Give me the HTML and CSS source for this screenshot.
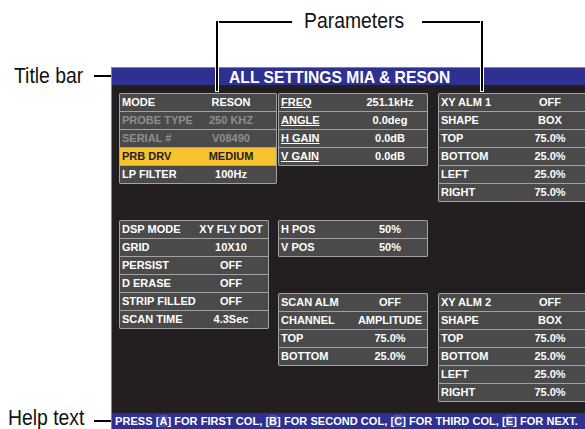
FILE: index.html
```html
<!DOCTYPE html>
<html lang="en">
  <head>
    <meta charset="UTF-8" />
    <title>All Settings MIA &amp; Reson</title>
    <link rel="stylesheet" href="styles.css">
  </head>
  <body>
    <div class="page">
      <div class="screen">
        <div class="titlebar">ALL SETTINGS MIA &amp; RESON</div>

        <div class="panes">
          <div class="pane pane-1">
            <div class="group group-wide">
              <div class="row"><span class="label">MODE</span><span class="value">RESON</span></div>
              <div class="row dim"><span class="label">PROBE TYPE</span><span class="value">250 KHZ</span></div>
              <div class="row dim"><span class="label">SERIAL #</span><span class="value">V08490</span></div>
              <div class="row active"><span class="label">PRB DRV</span><span class="value">MEDIUM</span></div>
              <div class="row"><span class="label">LP FILTER</span><span class="value">100Hz</span></div>
            </div>
            <div class="group space-36">
              <div class="row"><span class="label">DSP MODE</span><span class="value">XY FLY DOT</span></div>
              <div class="row"><span class="label">GRID</span><span class="value">10X10</span></div>
              <div class="row"><span class="label">PERSIST</span><span class="value">OFF</span></div>
              <div class="row"><span class="label">D ERASE</span><span class="value">OFF</span></div>
              <div class="row"><span class="label">STRIP FILLED</span><span class="value">OFF</span></div>
              <div class="row"><span class="label">SCAN TIME</span><span class="value">4.3Sec</span></div>
            </div>
          </div>

          <div class="pane pane-2">
            <div class="group">
              <div class="row"><span class="label link">FREQ</span><span class="value">251.1kHz</span></div>
              <div class="row"><span class="label link">ANGLE</span><span class="value">0.0deg</span></div>
              <div class="row"><span class="label link">H GAIN</span><span class="value">0.0dB</span></div>
              <div class="row"><span class="label link">V GAIN</span><span class="value">0.0dB</span></div>
            </div>
            <div class="group space-54">
              <div class="row"><span class="label">H POS</span><span class="value">50%</span></div>
              <div class="row"><span class="label">V POS</span><span class="value">50%</span></div>
            </div>
            <div class="group space-36">
              <div class="row"><span class="label">SCAN ALM</span><span class="value">OFF</span></div>
              <div class="row"><span class="label">CHANNEL</span><span class="value">AMPLITUDE</span></div>
              <div class="row"><span class="label">TOP</span><span class="value">75.0%</span></div>
              <div class="row"><span class="label">BOTTOM</span><span class="value">25.0%</span></div>
            </div>
          </div>

          <div class="pane pane-3">
            <div class="group">
              <div class="row"><span class="label">XY ALM 1</span><span class="value">OFF</span></div>
              <div class="row"><span class="label">SHAPE</span><span class="value">BOX</span></div>
              <div class="row"><span class="label">TOP</span><span class="value">75.0%</span></div>
              <div class="row"><span class="label">BOTTOM</span><span class="value">25.0%</span></div>
              <div class="row"><span class="label">LEFT</span><span class="value">25.0%</span></div>
              <div class="row"><span class="label">RIGHT</span><span class="value">75.0%</span></div>
            </div>
            <div class="group space-91">
              <div class="row"><span class="label">XY ALM 2</span><span class="value">OFF</span></div>
              <div class="row"><span class="label">SHAPE</span><span class="value">BOX</span></div>
              <div class="row"><span class="label">TOP</span><span class="value">75.0%</span></div>
              <div class="row"><span class="label">BOTTOM</span><span class="value">25.0%</span></div>
              <div class="row"><span class="label">LEFT</span><span class="value">25.0%</span></div>
              <div class="row"><span class="label">RIGHT</span><span class="value">75.0%</span></div>
            </div>
          </div>
        </div>

        <div class="helpbar">
          PRESS [<span class="key">A</span>] FOR FIRST COL, [<span class="key">B</span>] FOR SECOND COL, [<span class="key">C</span>] FOR THIRD COL, [<span class="key">E</span>] FOR NEXT.
        </div>
      </div>

      <!-- callouts -->
      <div class="callout callout-title">Title bar</div>
      <div class="callout callout-params">Parameters</div>
      <div class="callout callout-help">Help text</div>

      <div class="hline line-title"></div>
      <div class="hline line-help"></div>
      <div class="hline line-params-left"></div>
      <div class="hline line-params-right"></div>
      <div class="vline vline-left"></div>
      <div class="vline vline-right"></div>
    </div>
  </body>
</html>
```

FILE: styles.css
```css
html,
body {
  margin: 0;
  overflow: hidden;
  background: #ffffff;
}

.page {
  position: relative;
  width: 585px;
  height: 429px;
  overflow: hidden;
  padding: 67px 0 0 111px;
  box-sizing: border-box;
}

.screen {
  width: 490px;
  height: 370px;
  background: #231f20;
  border-left: 1px solid #858585;
  border-top: 1px solid #858585;
  font-family: "Liberation Sans", Arial, sans-serif;
  font-weight: bold;
  color: #ffffff;
}

.titlebar {
  height: 17px;
  line-height: 19px;
  padding-left: 117px;
  background: #2e3192;
  font-size: 15.7px;
  white-space: nowrap;
}

.panes {
  height: 320px;
  padding: 8px 0 0 7px;
  display: flex;
}

.pane {
  display: flex;
  flex-direction: column;
  align-items: flex-start;
}

.pane-1 {
  width: 159px;
}

.pane-2 {
  width: 160px;
}

.pane-3 {
  width: 152px;
}

.group {
  width: 148px;
  border: 1px solid #a2a2a2;
  border-bottom: none;
  border-radius: 2px;
  background: #4a4a4a;
}

.group-wide {
  width: 156px;
}

.space-36 {
  margin-top: 36px;
}

.space-54 {
  margin-top: 54px;
}

.space-91 {
  margin-top: 91px;
}

.row {
  display: grid;
  grid-template-columns: 70px 82px;
  height: 17px;
  line-height: 17px;
  border-bottom: 1px solid #a2a2a2;
  font-size: 11px;
  white-space: nowrap;
}

.label {
  padding-left: 2px;
}

.value {
  text-align: center;
}

.link {
  text-decoration: underline;
}

.dim {
  color: #8e8e8e;
}

.active {
  background: #f6c22e;
  color: #231f20;
}

.helpbar {
  height: 17px;
  line-height: 17px;
  padding-left: 3px;
  background: #2e3192;
  font-size: 11px;
  letter-spacing: 0.05px;
  white-space: nowrap;
}

.key {
  background: #4a4fa8;
}

/* callouts over the figure */
.callout {
  position: absolute;
  font-family: "Liberation Sans", Arial, sans-serif;
  font-size: 22px;
  line-height: 22px;
  color: #111111;
  white-space: nowrap;
  transform: scaleX(0.88);
  transform-origin: left center;
}

.callout-title {
  left: 14px;
  top: 65px;
}

.callout-params {
  left: 304px;
  top: 10px;
}

.callout-help {
  left: 8px;
  top: 407px;
}

.hline {
  position: absolute;
  height: 2px;
  background: #000000;
}

.line-title {
  left: 94px;
  top: 75px;
  width: 17px;
}

.line-help {
  left: 94px;
  top: 420px;
  width: 17px;
}

.line-params-left {
  left: 216px;
  top: 21px;
  width: 76px;
}

.line-params-right {
  left: 422px;
  top: 21px;
  width: 61px;
}

.vline {
  position: absolute;
  top: 21px;
  width: 2px;
  height: 70px;
  background: #000000;
  box-shadow: 0 0 0 1px #ffffff;
}

.vline-left {
  left: 216px;
}

.vline-right {
  left: 481px;
}
```
